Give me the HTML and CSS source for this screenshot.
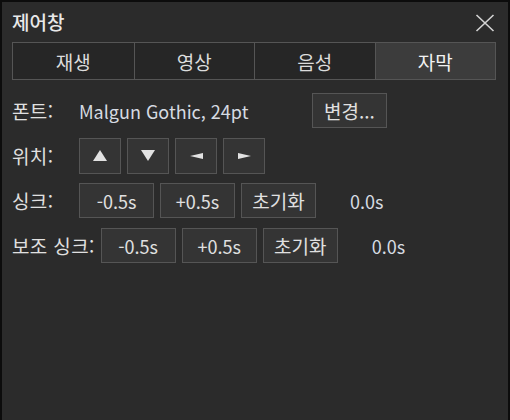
FILE: index.html
```html
<!DOCTYPE html>
<html lang="ko">
<head>
<meta charset="utf-8">
<title>제어창</title>
<link rel="stylesheet" href="styles.css">
</head>
<body>
<div class="window">
  <div class="titlebar">
    <span class="title">제어창</span>
    <span class="close">
      <svg width="20" height="18" viewBox="0 0 20 18"><path d="M1.5 1 L18.5 17 M18.5 1 L1.5 17" stroke="#d4d4d4" stroke-width="1.6" fill="none"/></svg>
    </span>
  </div>
  <div class="tabs">
    <div class="tab">재생</div>
    <div class="tab">영상</div>
    <div class="tab">음성</div>
    <div class="tab active">자막</div>
  </div>
  <div class="rows">
    <div class="row">
      <span class="label">폰트:</span>
      <span class="value">Malgun Gothic, 24pt</span>
      <button class="btn ko">변경...</button>
    </div>
    <div class="row">
      <span class="label">위치:</span>
      <button class="btn arrow"><svg width="14" height="11" viewBox="0 0 14 11"><polygon points="7,0 14,11 0,11" fill="#e2e2e2"/></svg></button>
      <button class="btn arrow"><svg width="14" height="11" viewBox="0 0 14 11"><polygon points="0,0 14,0 7,11" fill="#e2e2e2"/></svg></button>
      <button class="btn arrow"><svg width="13" height="6" viewBox="0 0 13 6"><polygon points="0,3 13,0 13,6" fill="#e2e2e2"/></svg></button>
      <button class="btn arrow"><svg width="13" height="6" viewBox="0 0 13 6"><polygon points="0,0 13,3 0,6" fill="#e2e2e2"/></svg></button>
    </div>
    <div class="row">
      <span class="label">싱크:</span>
      <button class="btn">-0.5s</button>
      <button class="btn">+0.5s</button>
      <button class="btn ko">초기화</button>
      <span class="readout">0.0s</span>
    </div>
    <div class="row">
      <span class="label">보조 싱크:</span>
      <button class="btn">-0.5s</button>
      <button class="btn">+0.5s</button>
      <button class="btn ko">초기화</button>
      <span class="readout">0.0s</span>
    </div>
  </div>
</div>
</body>
</html>
```

FILE: styles.css
```css
html, body {
  margin: 0;
  padding: 0;
  background: #2b2b2b;
}
body {
  font-family: "Noto Sans CJK KR", "Noto Sans", sans-serif;
  font-size: 18px;
  color: #e0e0e0;
}
.window {
  box-sizing: border-box;
  width: 510px;
  height: 420px;
  border: 2px solid #0c0c0c;
  border-bottom: none;
  background: #2b2b2b;
  padding: 0 12px 0 10px;
  display: flex;
  flex-direction: column;
}
.titlebar {
  height: 40px;
  display: flex;
  align-items: center;
  justify-content: space-between;
}
.title {
  font-size: 19px;
  font-weight: 500;
  color: #e8e8e8;
  line-height: 1;
  margin-top: -2px;
}
.close {
  display: flex;
  margin-right: 1px;
  margin-top: 1px;
}
.tabs {
  display: grid;
  grid-template-columns: repeat(4, 1fr);
  height: 38px;
  box-sizing: border-box;
  border: 1px solid #555555;
  background: #262626;
}
.tab {
  display: flex;
  align-items: center;
  justify-content: center;
  border-left: 1px solid #555555;
  color: #dcdcdc;
  font-size: 19px;
}
.tab:first-child {
  border-left: none;
}
.tab.active {
  background: #3c3c3c;
  color: #f2f2f2;
}
.rows {
  margin-top: 13px;
  display: flex;
  flex-direction: column;
  gap: 10px;
}
.row {
  display: flex;
  align-items: center;
  gap: 6px;
  height: 35px;
}
.label {
  min-width: 61px;
  white-space: nowrap;
  color: #e0e0e0;
  font-size: 19px;
  letter-spacing: 0.35px;
}
.value {
  width: 227px;
  color: #d6dbe2;
}
.btn {
  box-sizing: border-box;
  width: 75px;
  height: 35px;
  margin: 0;
  padding: 0;
  background: #343434;
  border: 1px solid #555555;
  border-radius: 0;
  color: #e0e0e0;
  font-family: inherit;
  font-size: 18px;
  display: flex;
  align-items: center;
  justify-content: center;
}
.btn.ko {
  font-size: 19px;
}
.btn.arrow {
  width: 42px;
  height: 36px;
}
.readout {
  margin-left: 28px;
  color: #d6dbe2;
}
```
